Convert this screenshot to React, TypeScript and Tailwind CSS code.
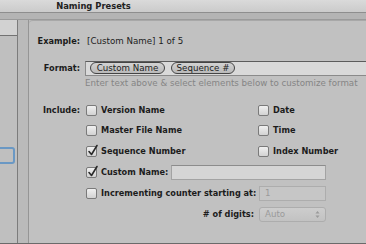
import React from "react";

const font = { fontFamily: '"DejaVu Sans", "Liberation Sans", sans-serif' };

function Check({ checked = false }: { checked?: boolean }) {
  return (
    <div className="relative w-[11px] h-[11px] shrink-0 rounded-[2px] border border-[#7a7a7a] bg-gradient-to-b from-[#f0f0f0] to-[#d2d2d2]">
      {checked && (
        <svg className="absolute -top-[3px] left-[0px]" width="12" height="13" viewBox="0 0 12 13">
          <path d="M2 7.5 L4.5 10.5 L10 1.5" fill="none" stroke="#2a2a2a" strokeWidth="1.6" strokeLinecap="round" strokeLinejoin="round" />
        </svg>
      )}
    </div>
  );
}

function CheckLabel({ label, checked = false }: { label: string; checked?: boolean }) {
  return (
    <div className="flex items-center gap-[4px] whitespace-nowrap">
      <Check checked={checked} />
      <span className="font-bold text-[8.2px] text-[#1c1c1c]">{label}</span>
    </div>
  );
}

export default function App() {
  return (
    <div
      className="w-[366px] h-[244px] overflow-hidden bg-[#bdbdbd] flex flex-col text-[8.7px] leading-none border-b border-[#6a6a6a]"
      style={font}
    >
      {/* title bar */}
      <div className="h-[13px] shrink-0 flex items-center bg-gradient-to-b from-[#dadada] to-[#cbcbcb] border-b border-[#8e8e8e]">
        <div className="w-[187px] text-center font-bold text-[8.4px] text-[#222] whitespace-nowrap">Naming Presets</div>
      </div>
      {/* band */}
      <div className="h-[7px] shrink-0 bg-[#b4b4b4] border-b border-[#9a9a9a]" />
      <div className="flex flex-1 min-h-0">
        {/* left list */}
        <div className="relative w-[18px] shrink-0 border-r border-[#7c7c7c] bg-[#bfbfbf]">
          <div className="h-[16px] bg-[#d2d2d2] border-b border-[#727272]" />
          <div className="absolute left-[-8px] top-[127px] w-[23px] h-[17px] rounded-[3px] border-[2px] border-[#6a98c4] bg-[#bfbfbf]" />
        </div>
        {/* divider column */}
        <div className="w-[11px] shrink-0 bg-[#bababa] border-r border-[#959595]" />
        {/* main panel */}
        <div className="flex-1 bg-[#c1c1c1] rounded-tl-[4px] border-t border-[#a8a8a8] border-r border-[#8a8a8a] mr-[3px]">
          <div className="flex flex-col">
            {/* Example */}
            <div className="flex items-center h-[14px] mt-[13px]">
              <div className="w-[51px] text-right font-bold text-[8.2px] text-[#1c1c1c]">Example:</div>
              <div className="ml-[7px] text-[#1c1c1c] whitespace-nowrap">[Custom Name] 1 of 5</div>
            </div>
            {/* Format */}
            <div className="flex items-center h-[14px] mt-[13px]">
              <div className="w-[51px] text-right font-bold text-[8.2px] text-[#1c1c1c]">Format:</div>
              <div className="ml-[5px] w-[300px] h-[15px] shrink-0 flex items-center gap-[6px] pl-[4px] bg-[#d9d9d9] border border-[#8a8a8a] border-t-[#5c5c5c]">
                <div className="h-[12px] w-[75px] flex items-center justify-center rounded-full border border-[#444] bg-gradient-to-b from-[#d2d2d2] to-[#b9b9b9] text-[#1c1c1c] whitespace-nowrap">
                  Custom Name
                </div>
                <div className="h-[12px] w-[64px] flex items-center justify-center rounded-full border border-[#444] bg-gradient-to-b from-[#d2d2d2] to-[#b9b9b9] text-[#1c1c1c] whitespace-nowrap">
                  Sequence #
                </div>
              </div>
            </div>
            {/* hint */}
            <div className="flex items-center h-[12px] mt-[2px]">
              <div className="w-[51px]" />
              <div className="ml-[5px] text-[#858585] whitespace-nowrap">
                Enter text above &amp; select elements below to customize format
              </div>
            </div>
            {/* Include rows */}
            <div className="flex flex-col mt-[11px]">
              <div className="flex items-center h-[20px]">
                <div className="w-[51px] text-right font-bold text-[8.2px] text-[#1c1c1c]">Include:</div>
                <div className="ml-[6px] w-[172px]">
                  <CheckLabel label="Version Name" />
                </div>
                <CheckLabel label="Date" />
              </div>
              <div className="flex items-center h-[21px]">
                <div className="w-[51px]" />
                <div className="ml-[6px] w-[172px]">
                  <CheckLabel label="Master File Name" />
                </div>
                <CheckLabel label="Time" />
              </div>
              <div className="flex items-center h-[21px]">
                <div className="w-[51px]" />
                <div className="ml-[6px] w-[172px]">
                  <CheckLabel label="Sequence Number" checked />
                </div>
                <CheckLabel label="Index Number" />
              </div>
              <div className="flex items-center h-[21px]">
                <div className="w-[51px]" />
                <div className="ml-[6px] w-[85px] shrink-0">
                  <CheckLabel label="Custom Name:" checked />
                </div>
                <div className="w-[155px] h-[15px] bg-[#d5d5d5] border border-[#a3a3a3] border-t-[#8c8c8c]" />
              </div>
              <div className="flex items-center h-[21px]">
                <div className="w-[51px]" />
                <div className="ml-[6px] w-[173px] shrink-0">
                  <CheckLabel label="Incrementing counter starting at:" />
                </div>
                <div className="w-[67px] h-[15px] flex items-center pl-[5px] bg-[#c6c6c6] border border-[#adadad] text-[#9a9a9a]">
                  1
                </div>
              </div>
              <div className="flex items-center h-[21px]">
                <div className="w-[51px]" />
                <div className="ml-[6px] w-[168px] shrink-0 text-right font-bold text-[8.2px] text-[#1c1c1c] whitespace-nowrap"># of digits:</div>
                <div className="ml-[5px] w-[67px] h-[15px] flex items-center justify-between px-[5px] rounded-[3px] bg-gradient-to-b from-[#cdcdcd] to-[#c2c2c2] border border-[#adadad] text-[#9a9a9a]">
                  <span>Auto</span>
                  <svg width="5" height="9" viewBox="0 0 5 9">
                    <path d="M0.5 3.5 L2.5 1 L4.5 3.5 Z" fill="#9a9a9a" />
                    <path d="M0.5 5.5 L2.5 8 L4.5 5.5 Z" fill="#9a9a9a" />
                  </svg>
                </div>
              </div>
            </div>
          </div>
        </div>
      </div>
    </div>
  );
}
